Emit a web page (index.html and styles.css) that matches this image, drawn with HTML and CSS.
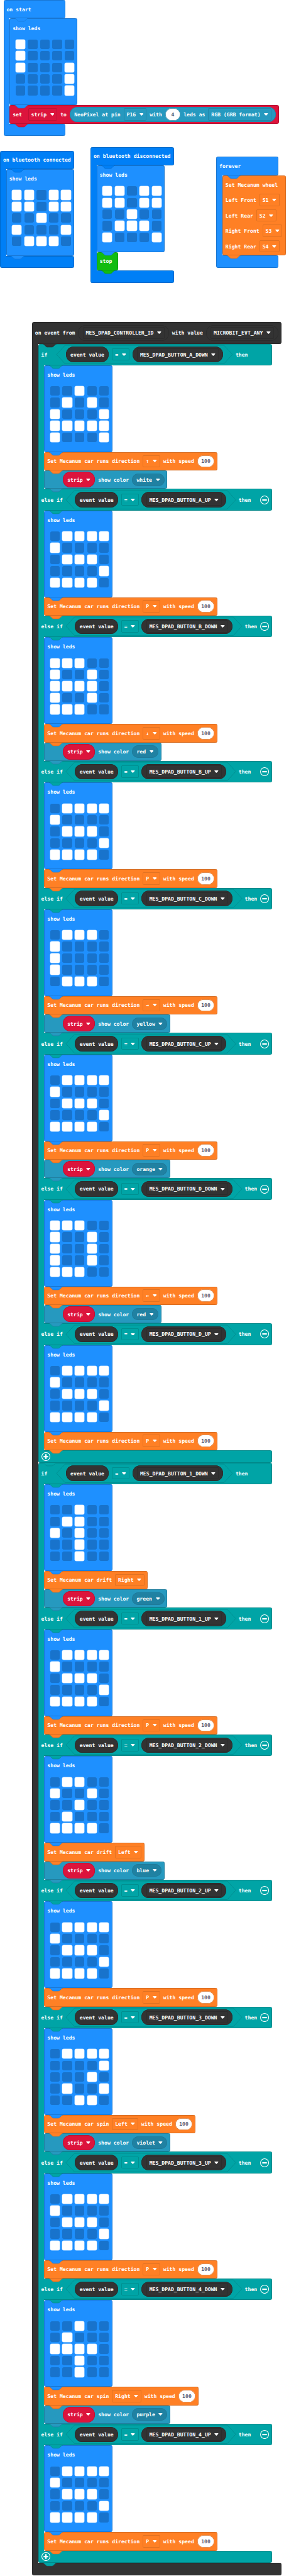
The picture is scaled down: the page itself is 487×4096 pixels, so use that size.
FILE: index.html
```
<!DOCTYPE html>
<html lang="en">
<head>
<meta charset="utf-8">
<title>Mecanum car blocks</title>
<link rel="stylesheet" href="styles.css">
</head>
<body>
<main class="workspace" id="workspace"></main>
<script src="script.js"></script>
</body>
</html>
```

FILE: styles.css
```
/* 1rem is ten workspace units */
html { font-size: 6.129px; }
body { margin: 0; background: #fff; }

.workspace {
  position: relative;
  width: 487px;
  height: 4096px;
  overflow: hidden;
  font-family: "DejaVu Sans Mono", "Liberation Mono", monospace;
  font-weight: 700;
  font-size: 1.33rem;
  line-height: 1;
  color: #fff;
  text-rendering: geometricPrecision;
}

/* scripts sit freely on the canvas */
.script { position: absolute; }
.at-start { left: 0.9rem; top: 0; }
.at-connected { left: 0; top: 39.1rem; }
.at-disconnected { left: 23.5rem; top: 38.1rem; }
.at-forever { left: 56.15rem; top: 40.65rem; }
.at-event { left: 8.3rem; top: 83.57rem; }

.w-event { width: 64.85rem; }
.w-start { width: 16.05rem; }
.w-connected { width: 19.2rem; }
.w-disconnected { width: 21.65rem; }
.w-logic { width: 60.8rem; }

.basic { --c: #1e90ff; --d: #1976d2; }
.ble { --c: #007ff6; --d: #0069c9; }
.event { --c: #333333; --d: #2b2b2b; }
.logic { --c: #00a4a6; --d: #008889; }
.car { --c: #ff8025; --d: #d86d22; }
.neo { --c: #2699bf; --d: #207f9f; }
.vars { --c: #dc143c; --d: #b71132; }
.stop { --c: #12bc12; --d: #109c12; }

.block {
  position: relative;
  box-sizing: border-box;
  display: flex;
  align-items: center;
  gap: 0.8rem;
  width: max-content;
  height: 4.8rem;
  padding: 0 calc(0.8rem - 1px);
  background: var(--c);
  border: 1px solid var(--d);
  border-radius: 0.4rem;
}
.block > * { flex: none; }
.tall { height: 5.6rem; }
.head { width: 100%; z-index: 1; }
.foot { width: 100%; height: 3.2rem; }
.w-disconnected > .head { width: 21.65rem; }

.body {
  box-sizing: border-box;
  position: relative;
  display: flex;
  flex-direction: column;
  align-items: flex-start;
  padding-left: 1.6rem;
}
/* the spine joins header, body and footer */
.body::before {
  content: "";
  position: absolute;
  z-index: 2;
  left: 0;
  top: -0.6rem;
  bottom: -0.6rem;
  width: 1.6rem;
  box-sizing: border-box;
  background: var(--c);
  border-left: 1px solid var(--d);
}
.body > * { z-index: 2; }
.group { position: relative; z-index: 3; }

.notch {
  position: absolute;
  left: calc(1.2rem - 1px);
  top: -1px;
  width: 3.6rem;
  height: 0.85rem;
  overflow: visible;
}
.notch.inner { left: calc(2.8rem - 1px); }
.notch path { fill: var(--c); stroke: var(--d); stroke-width: 1.1; }

.txt { white-space: pre; display: block; }

.field {
  box-sizing: border-box;
  display: flex;
  align-items: center;
  gap: 0.9rem;
  height: 3.2rem;
  padding: 0 0.8rem;
  box-shadow: inset 0 0 0 0.7px var(--d);
  border-radius: 0.4rem;
}
.arrow { width: 1.1rem; height: 0.65rem; fill: #fff; display: block; }
.field.narrow { width: 4.5rem; }

.oval {
  box-sizing: border-box;
  display: flex;
  align-items: center;
  gap: 0.8rem;
  height: 4rem;
  padding: 0 1.2rem;
  border-radius: 2rem;
  background: var(--c);
  box-shadow: inset 0 0 0 0.7px var(--d);
}
.oval.var { gap: 0.9rem; margin-left: 4rem; }
.oval.color { gap: 0.9rem; height: 3.2rem; background: #2081a2; box-shadow: inset 0 0 0 0.7px #1e7896; }
.oval.num {
  height: 3.2rem;
  min-width: 4rem;
  padding: 0 1.05rem;
  justify-content: center;
  background: #fff;
  color: #575e75;
}

.hex {
  position: relative;
  display: flex;
  align-items: center;
  gap: 0.8rem;
  height: 4.8rem;
  padding: 0 2.4rem;
}
.hex-line { position: absolute; left: 0; top: 0; width: 100%; height: 100%; overflow: visible; }
.hex-line path { fill: none; stroke: var(--d); stroke-width: 1.2; }
.hex > .oval { position: relative; }

.if-word { margin-right: 1.6rem; }
.round-icon { width: 2.3rem; height: 2.3rem; display: block; fill: none; stroke: #fff; }
.remove { margin-left: auto; }

.leds {
  height: 22.49rem;
  width: 17.65rem;
  flex-direction: column;
  align-items: flex-start;
  gap: 0;
}
.leds .txt { margin-top: 1.65rem; }
.led-grid {
  display: grid;
  grid-template-columns: repeat(5, 2.5rem);
  grid-auto-rows: 2.5rem;
  column-gap: 0.7rem;
  row-gap: 0.51rem;
  margin: 2.28rem 0 0 0.72rem;
}
.led { background: #1873cc; border-radius: 0.45rem; }
.led.on { background: #fff; box-shadow: 0 0 0 0.5px #b9dcff; }

.wheel { height: 20.85rem; flex-direction: column; align-items: flex-start; gap: 0.8rem; width: 16.45rem; }
.wheel .row { display: flex; align-items: center; gap: 0.8rem; height: 3.2rem; }
.wheel .row:first-of-type { margin-top: 0.7rem; }
```

FILE: script.js
```
const el = (cls, ...kids) => {
  const n = document.createElement('div');
  n.className = cls;
  n.append(...kids);
  return n;
};
const svg = (cls, box, inner, ratio = 'xMidYMid meet') => {
  const t = document.createElement('template');
  t.innerHTML = `<svg class="${cls}" viewBox="${box}" preserveAspectRatio="${ratio}" aria-hidden="true">${inner}</svg>`;
  return t.content.firstChild;
};

// every glyph occupies 0.8rem
const txt = (s, cls = '') => {
  const n = document.createElement('span');
  n.className = 'txt ' + cls;
  n.textContent = s;
  n.style.width = s.length * 0.8 + 'rem';
  return n;
};
const arrow = () => svg('arrow', '0 0 11 6.5', '<path d="M1.2 0H9.800Q11 .2 10.300 1.500L6.500 5.800Q5.500 6.800 4.500 5.800L.7 1.500Q0 .2 1.200 0Z"/>');
const field = (s, cls = '') => el('field ' + cls, txt(s), arrow());
const num = s => el('oval num', txt(s));
const notch = kind => svg('notch ' + kind, '0 0 36 8.5', '<path d="M0 0C2 0 3 1 4 2L8 6C9 7 10 8 12 8H24C26 8 27 7 28 6L32 2C33 1 34 0 36 0"/>');

const block = (kind, prev, ...kids) => {
  const b = el('block ' + kind, ...kids);
  if (prev) b.append(notch(prev));
  return b;
};

const leds = (prev, rows) => {
  const grid = el('led-grid');
  for (const c of rows.replace(/ /g, '')) grid.append(el(c === '#' ? 'led on' : 'led'));
  return block('basic leds', prev, txt('show leds'), grid);
};
const run = dir => block('car', 'basic', txt('Set Mecanum car runs direction'),
  field(dir, 'narrow'), txt('with speed'), num('100'));
const drift = dir => block('car', 'basic', txt('Set Mecanum car drift'), field(dir));
const spin = dir => block('car', 'basic', txt('Set Mecanum car spin'), field(dir), txt('with speed'), num('100'));
const color = name => block('neo', 'car', el('oval var vars', txt('strip'), arrow()),
  txt('show color'), el('oval color', txt(name), arrow()));

const condition = name => {
  const w = 216 + 44.5 + name.length * 8 + 60;
  return el('hex',
    svg('hex-line', `0 0 ${w} 48`, `<path d="M24 0H${w - 24}L${w} 24L${w - 24} 48H24L0 24Z"/>`, 'none'),
    el('oval event', txt('event value')), field('=', 'narrow'),
    el('oval event', field(name)));
};
const minus = () => svg('round-icon remove', '0 0 23 23', '<circle cx="11.500" cy="11.500" r="10.600" stroke-width="1.700"/><path d="M5.500 11.500H17.500" stroke-width="3.600"/>');
const plus = () => svg('round-icon', '0 0 23 23', '<circle cx="11.500" cy="11.500" r="10.600" stroke-width="1.700"/><path d="M5.500 11.500H17.500M11.500 5.500V17.500" stroke-width="3.800"/>');

const P = '.#### #.... .###. ....# ####.';

// branches: [button, led rows, [statements]]
const chain = (first, branches) => {
  const group = el('group w-logic logic');
  let prev = first;
  branches.forEach(([button, rows, statements], i) => {
    const name = 'MES_DPAD_BUTTON_' + button;
    const row = i === 0
      ? block('logic tall head', prev, txt('if', 'if-word'), condition(name), txt('then'))
      : block('logic tall head', prev, txt('else if'), condition(name), txt('then'), minus());
    group.append(row, el('body', leds('logic', rows), ...statements));
    prev = statements[statements.length - 1].classList.contains('neo') ? 'neo' : 'car';
    if (i > 0) row.querySelector('.notch').classList.add('inner');
  });
  const foot = block('logic foot', prev, plus());
  foot.querySelector('.notch').classList.add('inner');
  group.append(foot);
  return group;
};

const script = (place, kind, title, children, last) => {
  const foot = block(kind + ' foot', last);
  foot.querySelector('.notch').classList.add('inner');
  return el(`script ${place} ${kind}`,
    block(kind + ' head' + (title.length > 1 ? ' tall' : ''), null, ...title),
    el('body', ...children), foot);
};

document.getElementById('workspace').append(
  script('at-start w-start', 'basic', [txt('on start')], [
    leds('basic', '#.... #.... #...# ....# ....#'),
    block('vars', 'basic', txt('set '), field('strip'), txt('to'),
      el('oval neo', txt('NeoPixel at pin'), field('P16'), txt('with'), num('4'), txt('leds as'), field('RGB (GRB format)')))
  ], 'vars'),
  script('at-connected w-connected', 'ble', [txt('on bluetooth connected')], [
    leds('ble', '##.## ##.## ..#.. #...# .###.')
  ], 'basic'),
  script('at-disconnected w-disconnected', 'ble', [txt('on bluetooth disconnected')], [
    leds('ble', '##.## ##.## ..#.. .###. #...#'),
    block('stop', 'basic', txt('stop '))
  ], 'stop'),
  script('at-forever w-start', 'basic', [txt('forever')], [
    block('car wheel', 'basic',
      el('row', txt('Set Mecanum wheel')),
      el('row', txt('Left Front'), field('S1')),
      el('row', txt('Left Rear'), field('S2')),
      el('row', txt('Right Front'), field('S3')),
      el('row', txt('Right Rear'), field('S4')))
  ], 'car'),
  script('at-event w-event', 'event', [
    txt('on event from'), el('oval event', field('MES_DPAD_CONTROLLER_ID')),
    txt('with value'), el('oval event', field('MICROBIT_EVT_ANY'))
  ], [
    chain('event', [
      ['A_DOWN', '..#.. .#.#. #...# ##### #...#', [run('↑'), color('white')]],
      ['A_UP', P, [run('P')]],
      ['B_DOWN', '###.. #..#. ####. #..#. ###..', [run('↓'), color('red')]],
      ['B_UP', P, [run('P')]],
      ['C_DOWN', '.###. #.... #.... #.... .###.', [run('→'), color('yellow')]],
      ['C_UP', P, [run('P'), color('orange')]],
      ['D_DOWN', '###.. #..#. #..#. #..#. ###..', [run('←'), color('red')]],
      ['D_UP', P, [run('P')]]
    ]),
    chain('logic', [
      ['1_DOWN', '..#.. .##.. #.#.. ..#.. ..#..', [drift('Right'), color('green')]],
      ['1_UP', P, [run('P')]],
      ['2_DOWN', '.##.. #..#. ..#.. .#... ####.', [drift('Left'), color('blue')]],
      ['2_UP', P, [run('P')]],
      ['3_DOWN', '.#### ....# ...#. .#..# ..##.', [spin('Left'), color('violet')]],
      ['3_UP', P, [run('P')]],
      ['4_DOWN', '..#.. .#... ####. ..#.. ..#..', [spin('Right'), color('purple')]],
      ['4_UP', P, [run('P')]]
    ])
  ], 'logic')
);
```
